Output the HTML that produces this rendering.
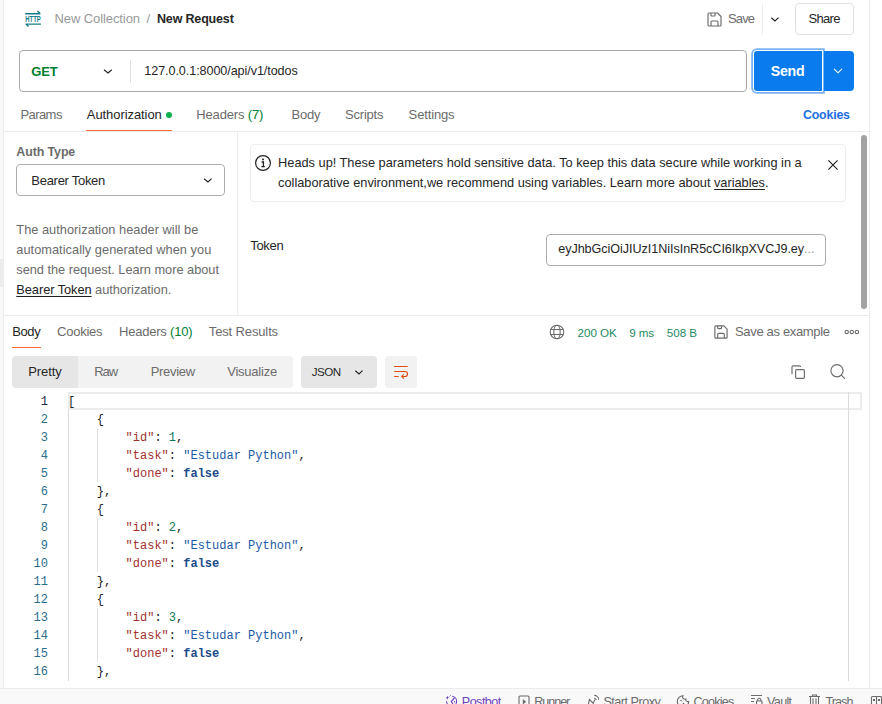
<!DOCTYPE html>
<html><head><meta charset="utf-8"><style>
html,body{margin:0;padding:0;width:882px;height:704px;overflow:hidden;background:#fff;}
body{position:relative;font-family:"Liberation Sans",sans-serif;}
.t{position:absolute;white-space:nowrap;}
.r{position:absolute;}
.m{position:absolute;white-space:pre;font-family:"Liberation Mono",monospace;font-size:12px;line-height:16px;}
</style></head><body>
<div class="r" style="left:0.00px;top:0.00px;width:3.50px;height:688.00px;background:#f9f9f9;"></div>
<div class="r" style="left:0.00px;top:259.00px;width:3.50px;height:28.00px;background:#ececec;"></div>
<div class="r" style="left:3.00px;top:0.00px;width:1.00px;height:688.00px;background:#ececec;"></div>
<div class="r" style="left:869.00px;top:0.00px;width:1.00px;height:688.00px;background:#ececec;"></div>
<div class="r" style="left:0.00px;top:688.00px;width:882.00px;height:16.00px;background:#f9f9f9;"></div>
<div class="r" style="left:0.00px;top:688.00px;width:882.00px;height:1.00px;background:#ececec;"></div>
<svg class="r" style="left:20.00px;top:6.00px" width="26" height="26" viewBox="20 6 26 26"><g fill="none" stroke="#127c8a" stroke-width="1.4"><path d="M25.2 13.8H40.3M37.4 11.1L40.3 13.8"/><path d="M40.9 24.1H25.8M28.6 26.6L25.8 24.1"/></g><text x="33" y="22" text-anchor="middle" font-family="Liberation Sans" font-weight="700" font-size="8.2" fill="#127c8a" textLength="15.4" lengthAdjust="spacingAndGlyphs" transform="translate(0,-3.6) scale(1,1.17)">HTTP</text></svg>
<div class="t" style="left:54.50px;top:12.00px;font-size:13.00px;line-height:13.00px;color:#999999;letter-spacing:-0.092px;">New Collection</div>
<div class="t" style="left:146.50px;top:12.00px;font-size:13.00px;line-height:13.00px;color:#999999;">/</div>
<div class="t" style="left:157.00px;top:13.00px;font-size:12.50px;line-height:12.50px;color:#262626;font-weight:700;letter-spacing:-0.169px;">New Request</div>
<svg class="r" style="left:705.60px;top:10.60px" width="17" height="17" viewBox="-2 -2 17 17"><g fill="none" stroke="#6b6b6b" stroke-width="1.150" stroke-linejoin="round"><path d="M1 0H9.5L13 3.5V12A1 1 0 0 1 12 13H1A1 1 0 0 1 0 12V1A1 1 0 0 1 1 0Z"/><path d="M3 0V2A1 1 0 0 0 4 3H6.1A1 1 0 0 0 7.1 2V0M3 13V9A1 1 0 0 1 4 8H9A1 1 0 0 1 10 9V13"/></g></svg>
<div class="t" style="left:728.00px;top:12.00px;font-size:13.00px;line-height:13.00px;color:#6b6b6b;letter-spacing:-0.877px;">Save</div>
<div class="r" style="left:762.00px;top:3.50px;width:1.00px;height:31.00px;background:#ececec;"></div>
<svg class="r" style="left:767.10px;top:14.60px" width="16" height="10" viewBox="767.1 14.6 16 10"><path d="M771.4 17.3L775.1 20.6L778.6 17.2" stroke="#212121" stroke-width="1.15" fill="none"/></svg>
<div class="r" style="left:795.00px;top:3.00px;width:59.00px;height:32.00px;border:1px solid #e0e0e0;border-radius:4px;box-sizing:border-box;"></div>
<div class="t" style="left:808.50px;top:12.00px;font-size:13.00px;line-height:13.00px;color:#262626;letter-spacing:-0.672px;">Share</div>
<div class="r" style="left:19.00px;top:50.00px;width:728.00px;height:42.00px;border:1px solid #a9a9a9;border-radius:4px;box-sizing:border-box;"></div>
<div class="t" style="left:31.30px;top:65.00px;font-size:13.00px;line-height:13.00px;color:#007f31;font-weight:700;letter-spacing:-0.112px;">GET</div>
<svg class="r" style="left:100.10px;top:66.60px" width="16" height="10" viewBox="100.1 66.6 16 10"><path d="M104.1 69.3L108.1 72.6L111.8 69.3" stroke="#212121" stroke-width="1.15" fill="none"/></svg>
<div class="r" style="left:130.00px;top:59.50px;width:1.00px;height:23.00px;background:#e0e0e0;"></div>
<div class="t" style="left:144.30px;top:65.00px;font-size:12.60px;line-height:12.60px;color:#262626;letter-spacing:-0.077px;">127.0.0.1:8000/api/v1/todos</div>
<div class="r" style="left:754.00px;top:51.00px;width:67.50px;height:39.80px;background:#097bed;border-radius:3px 0 0 3px;box-shadow:0 0 0 1px #fff,0 0 0 2.8px #7ab3f5;"></div>
<div class="t" style="left:770.70px;top:64.00px;font-size:14.20px;line-height:14.20px;color:#ffffff;font-weight:700;letter-spacing:-0.238px;">Send</div>
<div class="r" style="left:823.70px;top:51.00px;width:30.10px;height:39.80px;background:#097bed;border-radius:0 4px 4px 0;"></div>
<svg class="r" style="left:833.00px;top:67.00px" width="10" height="8" viewBox="0 0 10 8"><path d="M1 1.8L5 5.8L9 1.8" stroke="#ffffff" stroke-width="1.1" fill="none"/></svg>
<div class="t" style="left:20.40px;top:108.00px;font-size:13.00px;line-height:13.00px;color:#6b6b6b;letter-spacing:-0.557px;">Params</div>
<div class="t" style="left:86.80px;top:108.00px;font-size:13.00px;line-height:13.00px;color:#262626;letter-spacing:-0.073px;">Authorization</div>
<div class="r" style="left:166.00px;top:112.00px;width:6.00px;height:6.00px;background:#0cb14b;border-radius:50%;"></div>
<div class="r" style="left:86.00px;top:130.00px;width:86.00px;height:1.00px;background:#ff6c37;"></div>
<div class="t" style="left:196.30px;top:108.00px;font-size:13.00px;line-height:13.00px;color:#6b6b6b;letter-spacing:-0.163px;">Headers <span style="color:#007f31">(7)</span></div>
<div class="t" style="left:291.60px;top:108.00px;font-size:13.00px;line-height:13.00px;color:#6b6b6b;letter-spacing:-0.210px;">Body</div>
<div class="t" style="left:345.00px;top:108.00px;font-size:13.00px;line-height:13.00px;color:#6b6b6b;letter-spacing:-0.205px;">Scripts</div>
<div class="t" style="left:408.60px;top:108.00px;font-size:13.00px;line-height:13.00px;color:#6b6b6b;letter-spacing:-0.139px;">Settings</div>
<div class="t" style="left:803.00px;top:109.00px;font-size:12.40px;line-height:12.40px;color:#1e6ee3;font-weight:700;letter-spacing:-0.206px;">Cookies</div>
<div class="r" style="left:4.00px;top:131.00px;width:865.00px;height:1.00px;background:#ececec;"></div>
<div class="r" style="left:237.00px;top:132.00px;width:1.00px;height:183.00px;background:#ececec;"></div>
<div class="t" style="left:16.30px;top:146.00px;font-size:12.40px;line-height:12.40px;color:#6b6b6b;font-weight:700;letter-spacing:-0.087px;">Auth Type</div>
<div class="r" style="left:16.00px;top:164.00px;width:209.00px;height:32.00px;border:1px solid #adadad;border-radius:4px;box-sizing:border-box;"></div>
<div class="t" style="left:31.30px;top:174.00px;font-size:13.00px;line-height:13.00px;color:#262626;letter-spacing:-0.280px;">Bearer Token</div>
<svg class="r" style="left:200.10px;top:175.60px" width="16" height="10" viewBox="200.1 175.6 16 10"><path d="M204.2 178.3L208.1 181.6L211.7 178.3" stroke="#212121" stroke-width="1.15" fill="none"/></svg>
<div class="t" style="left:16.30px;top:224.00px;font-size:12.80px;line-height:12.80px;color:#6b6b6b;letter-spacing:0.018px;">The authorization header will be</div>
<div class="t" style="left:16.30px;top:244.00px;font-size:12.80px;line-height:12.80px;color:#6b6b6b;letter-spacing:0.024px;">automatically generated when you</div>
<div class="t" style="left:16.30px;top:264.00px;font-size:12.80px;line-height:12.80px;color:#6b6b6b;letter-spacing:-0.024px;">send the request. Learn more about</div>
<div class="t" style="left:16.30px;top:284.00px;font-size:12.80px;line-height:12.80px;color:#6b6b6b;letter-spacing:-0.050px;"><span style="color:#212121;text-decoration:underline;text-underline-offset:2px">Bearer Token</span> authorization.</div>
<div class="r" style="left:250.00px;top:144.00px;width:596.00px;height:58.00px;border:1px solid #ededed;border-radius:4px;box-sizing:border-box;"></div>
<svg class="r" style="left:254.00px;top:154.00px" width="18" height="18" viewBox="0 0 18 18"><circle cx="9" cy="9" r="7.4" stroke="#212121" stroke-width="1.2" fill="none"/><circle cx="9" cy="5.6" r="1" fill="#212121"/><path d="M7.6 8H9.4V12.6M7.4 12.6H10.8" stroke="#212121" stroke-width="1.3" fill="none"/></svg>
<div class="t" style="left:278.10px;top:157.00px;font-size:12.80px;line-height:12.80px;color:#262626;letter-spacing:-0.018px;">Heads up! These parameters hold sensitive data. To keep this data secure while working in a</div>
<div class="t" style="left:278.10px;top:177.00px;font-size:12.80px;line-height:12.80px;color:#262626;letter-spacing:-0.022px;">collaborative environment,we recommend using variables. Learn more about <span style="text-decoration:underline;text-underline-offset:2px">variables</span>.</div>
<svg class="r" style="left:823.00px;top:155.00px" width="20" height="20" viewBox="823 155 20 20"><path d="M828.4 160.4L837.6 169.6M837.6 160.4L828.4 169.6" stroke="#212121" stroke-width="1.15" fill="none"/></svg>
<div class="t" style="left:250.20px;top:239.00px;font-size:13.00px;line-height:13.00px;color:#262626;letter-spacing:-0.297px;">Token</div>
<div class="r" style="left:546.00px;top:234.00px;width:280.00px;height:32.00px;border:1px solid #adadad;border-radius:4px;box-sizing:border-box;"></div>
<div class="t" style="left:558.20px;top:243.00px;font-size:12.60px;line-height:12.60px;color:#262626;letter-spacing:-0.049px;">eyJhbGciOiJIUzI1NiIsInR5cCI6IkpXVCJ9.ey</div>
<div class="t" style="left:804.00px;top:243.00px;font-size:12.60px;line-height:12.60px;color:#9a9a9a;">...</div>
<div class="r" style="left:861.00px;top:135.00px;width:6.00px;height:174.00px;background:#a3a3a3;border-radius:3px;"></div>
<div class="r" style="left:4.00px;top:315.00px;width:865.00px;height:1.00px;background:#ececec;"></div>
<div class="t" style="left:12.20px;top:325.00px;font-size:13.00px;line-height:13.00px;color:#262626;letter-spacing:-0.377px;">Body</div>
<div class="t" style="left:57.10px;top:325.00px;font-size:13.00px;line-height:13.00px;color:#6b6b6b;letter-spacing:-0.244px;">Cookies</div>
<div class="t" style="left:119.00px;top:325.00px;font-size:13.00px;line-height:13.00px;color:#6b6b6b;letter-spacing:-0.215px;">Headers <span style="color:#007f31">(10)</span></div>
<div class="t" style="left:208.80px;top:325.00px;font-size:13.00px;line-height:13.00px;color:#6b6b6b;letter-spacing:-0.136px;">Test Results</div>
<div class="r" style="left:12.00px;top:347.00px;width:29.00px;height:1.00px;background:#ff6c37;"></div>
<svg class="r" style="left:548.00px;top:323.00px" width="18" height="18" viewBox="0 0 18 18"><g fill="none" stroke="#6b6b6b" stroke-width="1.1"><circle cx="9" cy="9" r="6.8"/><ellipse cx="9" cy="9" rx="3.2" ry="6.8"/><path d="M2.4 6.5H15.6M2.4 11.5H15.6"/></g></svg>
<div class="t" style="left:577.60px;top:327.00px;font-size:11.60px;line-height:11.60px;color:#248a63;letter-spacing:-0.027px;">200 OK</div>
<div class="t" style="left:629.20px;top:327.00px;font-size:11.60px;line-height:11.60px;color:#248a63;letter-spacing:-0.112px;">9 ms</div>
<div class="t" style="left:666.80px;top:327.00px;font-size:11.60px;line-height:11.60px;color:#248a63;letter-spacing:-0.028px;">508 B</div>
<svg class="r" style="left:713.12px;top:324.12px" width="15.954" height="15.954" viewBox="-2 -2 17 17"><g fill="none" stroke="#6b6b6b" stroke-width="1.225" stroke-linejoin="round"><path d="M1 0H9.5L13 3.5V12A1 1 0 0 1 12 13H1A1 1 0 0 1 0 12V1A1 1 0 0 1 1 0Z"/><path d="M3 0V2A1 1 0 0 0 4 3H6.1A1 1 0 0 0 7.1 2V0M3 13V9A1 1 0 0 1 4 8H9A1 1 0 0 1 10 9V13"/></g></svg>
<div class="t" style="left:735.00px;top:325.00px;font-size:13.00px;line-height:13.00px;color:#6b6b6b;letter-spacing:-0.337px;">Save as example</div>
<svg class="r" style="left:843.00px;top:328.00px" width="17" height="8" viewBox="0 0 17 8"><g fill="none" stroke="#6b6b6b" stroke-width="1.1"><circle cx="3.7" cy="4" r="1.7"/><circle cx="8.8" cy="4" r="1.7"/><circle cx="13.9" cy="4" r="1.7"/></g></svg>
<div class="r" style="left:12.00px;top:356.00px;width:281.00px;height:32.00px;background:#f2f2f2;border-radius:4px;"></div>
<div class="r" style="left:12.00px;top:356.00px;width:66.00px;height:32.00px;background:#e6e6e6;border-radius:4px 0 0 4px;"></div>
<div class="t" style="left:28.20px;top:365.00px;font-size:13.00px;line-height:13.00px;color:#262626;letter-spacing:-0.090px;">Pretty</div>
<div class="t" style="left:94.20px;top:365.00px;font-size:13.00px;line-height:13.00px;color:#6b6b6b;letter-spacing:-1.003px;">Raw</div>
<div class="t" style="left:150.70px;top:365.00px;font-size:13.00px;line-height:13.00px;color:#6b6b6b;letter-spacing:-0.289px;">Preview</div>
<div class="t" style="left:227.20px;top:365.00px;font-size:13.00px;line-height:13.00px;color:#6b6b6b;letter-spacing:-0.224px;">Visualize</div>
<div class="r" style="left:301.00px;top:356.00px;width:76.00px;height:32.00px;background:#e6e6e6;border-radius:4px;"></div>
<div class="t" style="left:311.70px;top:366.00px;font-size:11.60px;line-height:11.60px;color:#262626;letter-spacing:-0.479px;">JSON</div>
<svg class="r" style="left:351.10px;top:367.60px" width="16" height="10" viewBox="351.1 367.6 16 10"><path d="M355.4 370.3L359.1 373.6L362.6 370.2" stroke="#212121" stroke-width="1.15" fill="none"/></svg>
<div class="r" style="left:385.00px;top:356.00px;width:32.00px;height:32.00px;background:#f2f2f2;border-radius:4px;"></div>
<svg class="r" style="left:390.00px;top:360.00px" width="22" height="22" viewBox="390 360 22 22"><g fill="none" stroke="#de4c12" stroke-width="1.15"><path d="M394.1 366.45H407.7M394.1 371.45H405A2.5 2.5 0 0 1 405 376.45H401.8M403.8 374.3L401.7 376.45L403.8 378.6M394.1 376.45H398.6"/></g></svg>
<svg class="r" style="left:786.00px;top:360.00px" width="22" height="22" viewBox="786 360 22 22"><g fill="none" stroke="#6b6b6b" stroke-width="1.15"><rect x="795.6" y="369.6" width="8.8" height="8.8" rx="1.2"/><path d="M792 374.2V367A1.2 1.2 0 0 1 793.2 365.8H799.4A1.2 1.2 0 0 1 800.6 367"/></g></svg>
<svg class="r" style="left:826.00px;top:360.00px" width="22" height="22" viewBox="826 360 22 22"><g fill="none" stroke="#6b6b6b" stroke-width="1.15"><circle cx="837" cy="370.7" r="6.1"/><path d="M841.4 375.2L845 378.8"/></g></svg>
<div class="r" style="left:68.00px;top:392.00px;width:1.00px;height:289.00px;background:#dadada;"></div>
<div class="r" style="left:68.00px;top:392.00px;width:794.00px;height:18.00px;border:2px solid #ececec;box-sizing:border-box;"></div>
<div class="r" style="left:848.00px;top:392.00px;width:1.00px;height:289.00px;background:#dadada;"></div>
<div class="m" style="left:20px;top:394px;width:28px;text-align:right;color:#222a4e">1</div>
<div class="m" style="left:68px;top:394px;color:#212121">[</div>
<div class="m" style="left:20px;top:412px;width:28px;text-align:right;color:#2b6d8e">2</div>
<div class="m" style="left:68px;top:412px;color:#212121">    {</div>
<div class="m" style="left:20px;top:430px;width:28px;text-align:right;color:#2b6d8e">3</div>
<div class="m" style="left:68px;top:430px;color:#212121">        <span style="color:#a3302f">&quot;id&quot;</span>: <span style="color:#0e7a5c">1</span>,</div>
<div class="m" style="left:20px;top:448px;width:28px;text-align:right;color:#2b6d8e">4</div>
<div class="m" style="left:68px;top:448px;color:#212121">        <span style="color:#a3302f">&quot;task&quot;</span>: <span style="color:#1c5ba8">&quot;Estudar Python&quot;</span>,</div>
<div class="m" style="left:20px;top:466px;width:28px;text-align:right;color:#2b6d8e">5</div>
<div class="m" style="left:68px;top:466px;color:#212121">        <span style="color:#a3302f">&quot;done&quot;</span>: <span style="color:#1a4a8a;font-weight:700">false</span></div>
<div class="m" style="left:20px;top:484px;width:28px;text-align:right;color:#2b6d8e">6</div>
<div class="m" style="left:68px;top:484px;color:#212121">    },</div>
<div class="m" style="left:20px;top:502px;width:28px;text-align:right;color:#2b6d8e">7</div>
<div class="m" style="left:68px;top:502px;color:#212121">    {</div>
<div class="m" style="left:20px;top:520px;width:28px;text-align:right;color:#2b6d8e">8</div>
<div class="m" style="left:68px;top:520px;color:#212121">        <span style="color:#a3302f">&quot;id&quot;</span>: <span style="color:#0e7a5c">2</span>,</div>
<div class="m" style="left:20px;top:538px;width:28px;text-align:right;color:#2b6d8e">9</div>
<div class="m" style="left:68px;top:538px;color:#212121">        <span style="color:#a3302f">&quot;task&quot;</span>: <span style="color:#1c5ba8">&quot;Estudar Python&quot;</span>,</div>
<div class="m" style="left:20px;top:556px;width:28px;text-align:right;color:#2b6d8e">10</div>
<div class="m" style="left:68px;top:556px;color:#212121">        <span style="color:#a3302f">&quot;done&quot;</span>: <span style="color:#1a4a8a;font-weight:700">false</span></div>
<div class="m" style="left:20px;top:574px;width:28px;text-align:right;color:#2b6d8e">11</div>
<div class="m" style="left:68px;top:574px;color:#212121">    },</div>
<div class="m" style="left:20px;top:592px;width:28px;text-align:right;color:#2b6d8e">12</div>
<div class="m" style="left:68px;top:592px;color:#212121">    {</div>
<div class="m" style="left:20px;top:610px;width:28px;text-align:right;color:#2b6d8e">13</div>
<div class="m" style="left:68px;top:610px;color:#212121">        <span style="color:#a3302f">&quot;id&quot;</span>: <span style="color:#0e7a5c">3</span>,</div>
<div class="m" style="left:20px;top:628px;width:28px;text-align:right;color:#2b6d8e">14</div>
<div class="m" style="left:68px;top:628px;color:#212121">        <span style="color:#a3302f">&quot;task&quot;</span>: <span style="color:#1c5ba8">&quot;Estudar Python&quot;</span>,</div>
<div class="m" style="left:20px;top:646px;width:28px;text-align:right;color:#2b6d8e">15</div>
<div class="m" style="left:68px;top:646px;color:#212121">        <span style="color:#a3302f">&quot;done&quot;</span>: <span style="color:#1a4a8a;font-weight:700">false</span></div>
<div class="m" style="left:20px;top:664px;width:28px;text-align:right;color:#2b6d8e">16</div>
<div class="m" style="left:68px;top:664px;color:#212121">    },</div>
<div class="r" style="left:97.00px;top:428.00px;width:1.00px;height:54.00px;background:#e0e0e0;"></div>
<div class="r" style="left:97.00px;top:518.00px;width:1.00px;height:54.00px;background:#e0e0e0;"></div>
<div class="r" style="left:97.00px;top:608.00px;width:1.00px;height:54.00px;background:#e0e0e0;"></div>
<svg class="r" style="left:440.00px;top:690.00px" width="22" height="14" viewBox="440 690 22 14"><g fill="none" stroke="#6a3fc4" stroke-width="1.1"><path d="M452.2 696.3A5 5 0 1 1 446.6 701.2"/><path d="M454.7 697.6L451.2 701.6L453 704"/></g><path d="M447.4 695.9L448.1 697.3L449.3 697.7L448.1 698.1L447.4 699.5L446.7 698.1L445.5 697.7L446.7 697.3Z" fill="#6a3fc4"/><path d="M449.3 696.8L451 695" stroke="#6a3fc4" stroke-width="0.9" opacity="0.7"/><circle cx="454.5" cy="701.8" r="0.7" fill="#6a3fc4"/></svg>
<div class="t" style="left:461.80px;top:696.00px;font-size:12.60px;line-height:12.60px;color:#6f43c0;letter-spacing:-0.538px;">Postbot</div>
<svg class="r" style="left:517.00px;top:694.00px" width="14" height="12" viewBox="0 0 14 12"><g fill="none" stroke="#6b6b6b" stroke-width="1.1"><rect x="2" y="2" width="10" height="11" rx="1"/></g><path d="M5.8 5L9.2 7.8L5.8 10.6Z" fill="#6b6b6b"/></svg>
<div class="t" style="left:534.30px;top:696.00px;font-size:12.60px;line-height:12.60px;color:#6b6b6b;letter-spacing:-1.064px;">Runner</div>
<svg class="r" style="left:584.00px;top:690.00px" width="20" height="14" viewBox="584 690 20 14"><g fill="none" stroke="#6b6b6b" stroke-width="1.1"><path d="M588.4 704.5L589.4 699.3L593.2 703.4L594.8 699.6"/><path d="M594.3 695.4A4.4 4.4 0 0 1 598.7 699.6M594.3 697.9L596.5 699.9"/></g></svg>
<div class="t" style="left:603.40px;top:696.00px;font-size:12.60px;line-height:12.60px;color:#6b6b6b;letter-spacing:-0.481px;">Start Proxy</div>
<svg class="r" style="left:676.00px;top:694.00px" width="14" height="12" viewBox="0 0 14 12"><g fill="none" stroke="#6b6b6b" stroke-width="1.1"><path d="M7 1.8A5.7 5.7 0 1 0 12.7 7.5A2.2 2.2 0 0 1 9.8 5A2.2 2.2 0 0 1 7 1.8Z"/></g><circle cx="5" cy="6.5" r="0.8" fill="#6b6b6b"/><circle cx="7.5" cy="9.5" r="0.8" fill="#6b6b6b"/></svg>
<div class="t" style="left:693.40px;top:696.00px;font-size:12.60px;line-height:12.60px;color:#6b6b6b;letter-spacing:-0.753px;">Cookies</div>
<svg class="r" style="left:750.00px;top:694.00px" width="14" height="12" viewBox="0 0 14 12"><g fill="none" stroke="#6b6b6b" stroke-width="1.1"><path d="M1 1.5H12M1 4.5H5M1 7.5H4M1 10.5H4"/><rect x="6.5" y="7" width="5.5" height="5" rx="0.8"/><path d="M7.6 7V5.6A1.7 1.7 0 0 1 10.9 5.6V7"/></g></svg>
<div class="t" style="left:767.10px;top:696.00px;font-size:12.60px;line-height:12.60px;color:#6b6b6b;letter-spacing:-0.696px;">Vault</div>
<svg class="r" style="left:808.00px;top:694.00px" width="13" height="12" viewBox="0 0 13 12"><g fill="none" stroke="#6b6b6b" stroke-width="1.1"><path d="M1 2.5H12M4.5 2.5V1H8.5V2.5M2.5 2.5V13H10.5V2.5M5 4.5V13M8 4.5V13"/></g></svg>
<div class="t" style="left:825.50px;top:696.00px;font-size:12.60px;line-height:12.60px;color:#6b6b6b;letter-spacing:-0.935px;">Trash</div>
<svg class="r" style="left:870.00px;top:694.00px" width="12" height="12" viewBox="0 0 12 12"><g fill="none" stroke="#6b6b6b" stroke-width="1.1"><rect x="1.5" y="2.5" width="10" height="11" rx="1"/><path d="M6.5 2.5V13.5"/></g><rect x="3" y="5" width="2" height="2" fill="#6b6b6b"/><rect x="8" y="5" width="2" height="2" fill="#6b6b6b"/></svg>
</body></html>
